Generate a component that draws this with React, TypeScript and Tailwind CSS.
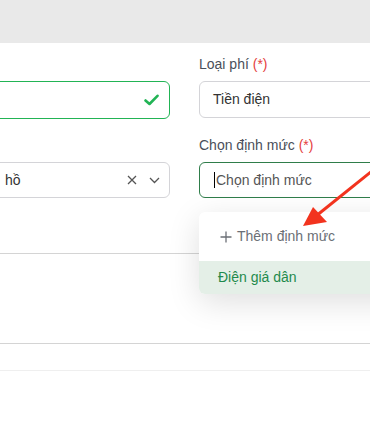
import React from "react";

const font = { fontFamily: '"Liberation Sans", Arial, sans-serif' };

export default function App() {
  return (
    <div className="relative w-[370px] h-[437px] overflow-hidden bg-white" style={font}>
      <div className="h-[43px] bg-[#e9e9e9]" />
      <div className="ml-[-130px] grid grid-cols-[300px_260px] gap-x-[29px] pt-[14px]">
        {/* row 1 */}
        <div className="flex flex-col gap-[9px]">
          <div className="h-[15px]" />
          <div className="h-[38px] rounded-[6px] border border-[#22b455] flex items-center justify-end pr-[10px]">
            <svg width="15" height="12" viewBox="0 0 15 12">
              <path d="M1.5 6.5 L5.5 10 L13.5 1.8" fill="none" stroke="#22b455" strokeWidth="2.6" strokeLinecap="round" strokeLinejoin="round" />
            </svg>
          </div>
        </div>
        <div className="flex flex-col gap-[9px]">
          <div className="h-[15px] text-[14px] leading-[15px] text-[#4a4f5a]">
            Loại phí <span className="text-[#e53e3e]">(*)</span>
          </div>
          <div className="h-[37px] rounded-[6px] border border-[#d4d4d8] flex items-center pl-[13px] text-[14px] text-[#333]">
            Tiền điện
          </div>
        </div>
        {/* row 2 */}
        <div className="flex flex-col gap-[9px] mt-[19px]">
          <div className="h-[15px]" />
          <div className="h-[36px] rounded-[6px] border border-[#d4d4d8] flex items-center pl-[134px] pr-[8px] text-[14px] text-[#333]">
            <span className="flex-1">hồ</span>
            <svg width="10" height="10" viewBox="0 0 10 10" className="mr-[12px]">
              <path d="M1 1 L9 9 M9 1 L1 9" stroke="#555" strokeWidth="1.3" />
            </svg>
            <svg width="11" height="7" viewBox="0 0 11 7" className="mr-[1px]">
              <path d="M1 1 L5.5 5.5 L10 1" fill="none" stroke="#555" strokeWidth="1.3" />
            </svg>
          </div>
        </div>
        <div className="relative flex flex-col gap-[9px] mt-[19px]">
          <div className="h-[15px] text-[14px] leading-[15px] text-[#4a4f5a]">
            Chọn định mức <span className="text-[#e53e3e]">(*)</span>
          </div>
          <div className="h-[36px] rounded-[6px] border border-[#2f7d4a] flex items-center pl-[14px] text-[14px] text-[#555]">
            <span className="w-[1px] h-[16px] bg-black mr-[1px]" />
            Chọn định mức
          </div>
          <div className="absolute left-0 top-[74px] z-10 w-[260px] rounded-[6px] bg-white shadow-[0_8px_32px_rgba(0,0,0,0.13)] overflow-hidden">
            <div className="h-[49px] flex items-center pl-[21px] text-[14px] text-[#6b6f76] gap-[5px]">
              <svg width="12" height="12" viewBox="0 0 12 12">
                <path d="M6 0.5 V11.5 M0.5 6 H11.5" stroke="#6b6f76" strokeWidth="1.3" />
              </svg>
              Thêm định mức
            </div>
            <div className="h-[33px] flex items-center pl-[19px] bg-[#e4efe7] text-[14px] text-[#1f8a4c]">
              Điện giá dân
            </div>
          </div>
        </div>
      </div>
      <div className="mt-[55px] h-[1px] bg-[#d4d4d4]" />
      <div className="mt-[89px] h-[1px] bg-[#d4d4d4]" />
      <div className="mt-[26px] h-[1px] bg-[#efefef]" />
      <svg className="absolute left-0 top-0 z-20 pointer-events-none" width="370" height="437">
        <line x1="372" y1="171" x2="316" y2="216" stroke="#f2331e" strokeWidth="3" />
        <polygon points="303,226 313,207 327,222" fill="#f2331e" />
      </svg>
    </div>
  );
}
